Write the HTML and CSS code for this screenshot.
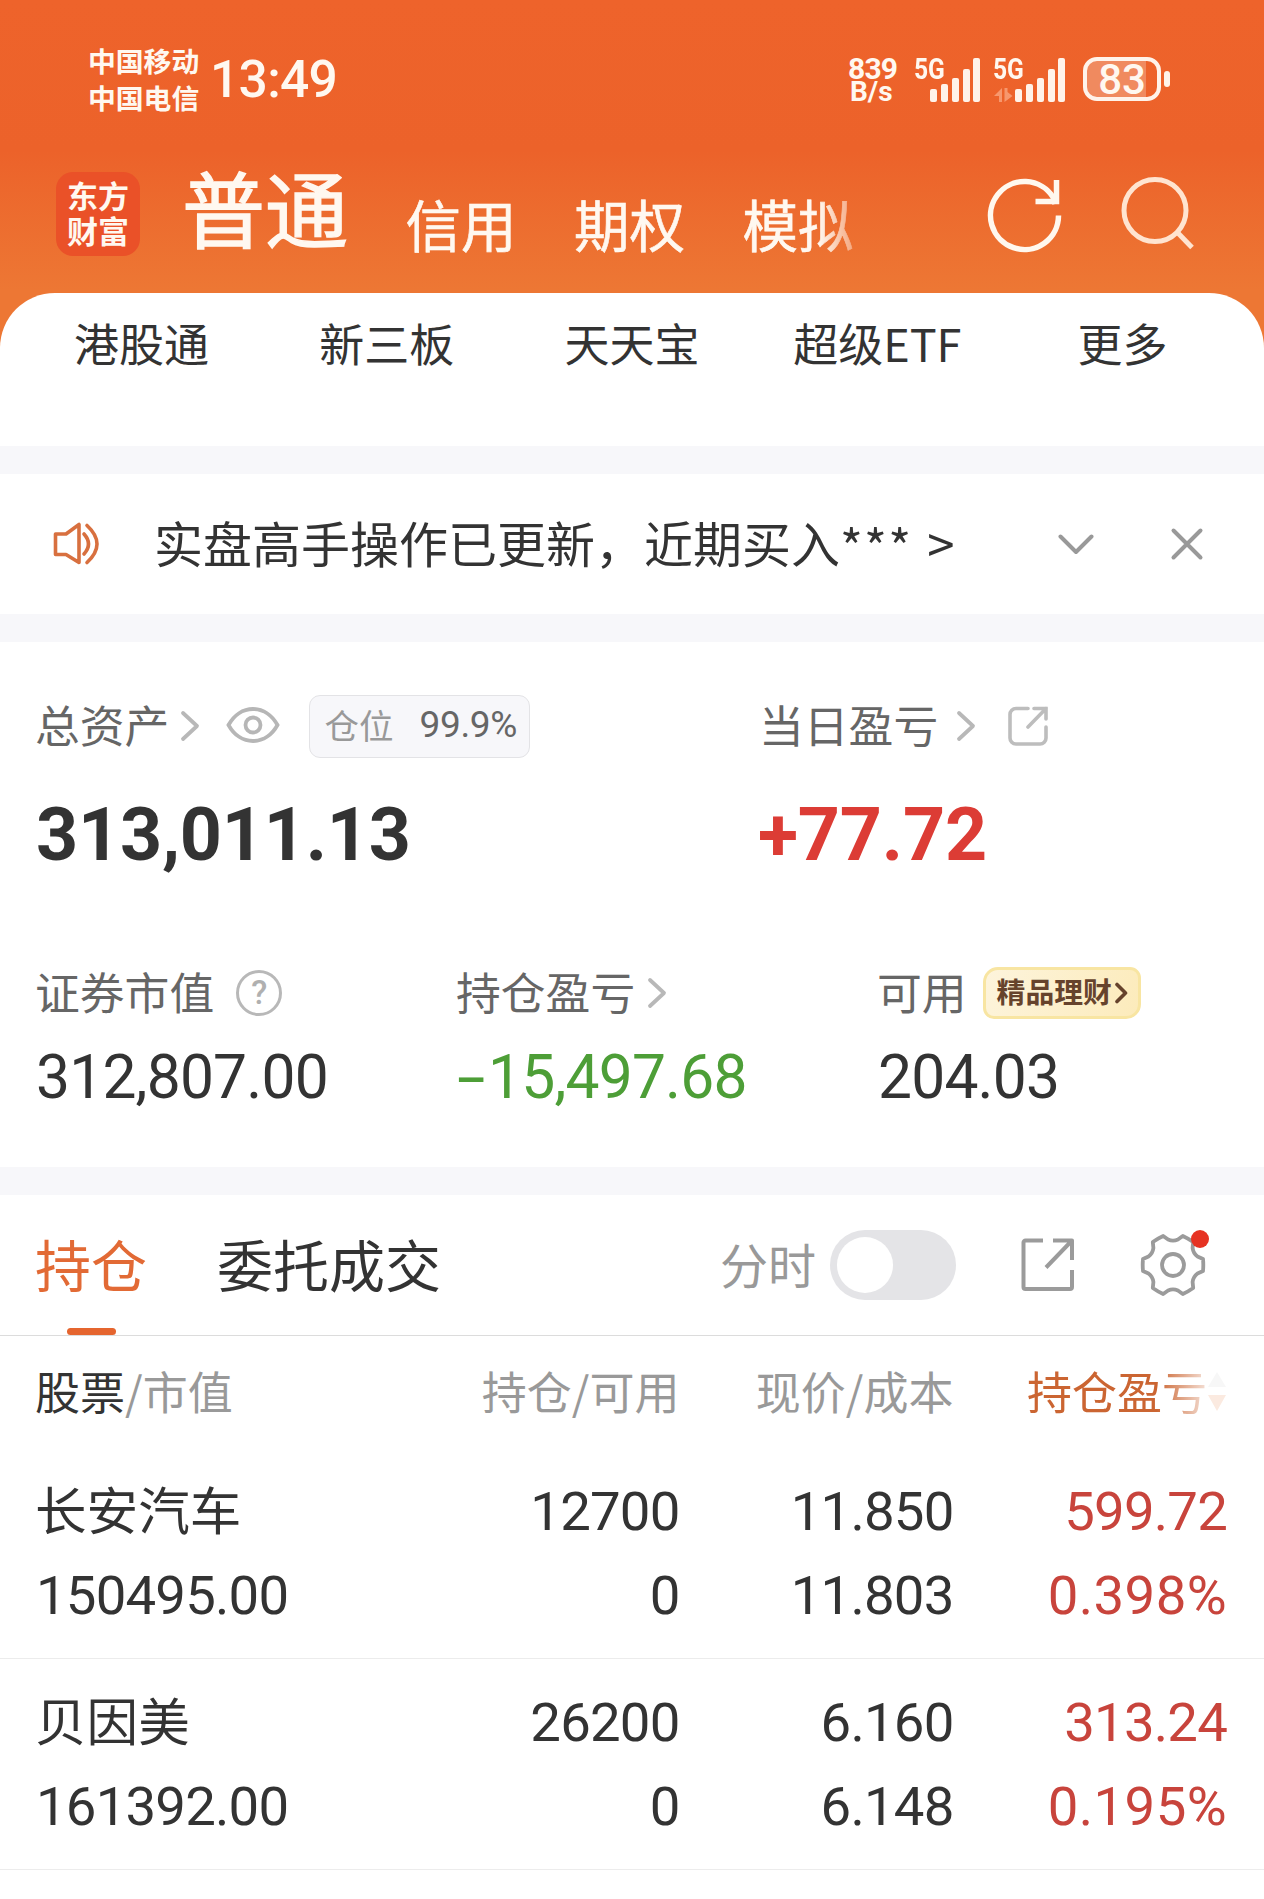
FILE: index.html
```html
<!DOCTYPE html>
<html lang="zh-CN">
<head>
<meta charset="utf-8">
<title>东方财富 - 持仓</title>
<link rel="stylesheet" href="styles.css">
</head>
<body>
<div class="page">
  <header class="header">
    <div class="status">
      <div class="carriers"><span>中国移动</span><span>中国电信</span></div>
      <div class="clock">13:49</div>
      <div class="speed"><span>839</span><span class="unit">B/s</span></div>
      <div class="signal">
        <span class="gen">5G</span>
        <svg width="66" height="46" viewBox="0 0 66 46" fill="#fff3ea"><rect x="15" y="32" width="7" height="13" rx="2"/><rect x="26" y="27" width="7" height="18" rx="2"/><rect x="37" y="21" width="7" height="24" rx="2"/><rect x="48" y="12" width="7" height="33" rx="2"/><rect x="58" y="1" width="7" height="44" rx="2"/></svg>
      </div>
      <div class="signal second">
        <span class="gen">5G</span>
        <svg width="72" height="46" viewBox="0 0 72 46" fill="#fff3ea"><path d="M8 31v14H5v-6H0zM10.500 45V31h3v4l5 4z" fill="#f7976d"/><rect x="21" y="32" width="7" height="13" rx="2"/><rect x="32" y="27" width="7" height="18" rx="2"/><rect x="43" y="21" width="7" height="24" rx="2"/><rect x="54" y="12" width="7" height="33" rx="2"/><rect x="64" y="1" width="7" height="44" rx="2"/></svg>
      </div>
      <div class="battery"><span class="cell">83</span><i class="nub"></i></div>
    </div>
    <div class="topbar">
      <div class="logo"><span>东方</span><span>财富</span></div>
      <nav class="accounts">
        <span class="current">普通</span><span>信用</span><span>期权</span><span>模拟</span>
      </nav>
      <svg class="refresh" width="80" height="80" viewBox="0 0 80 80" fill="none" stroke="#fff8ee" stroke-width="5.500"><path d="M74.500 41.500A34 34 0 1 1 69 23L71 30"/><path d="M72.500 6v21.500H51.500"/></svg>
      <svg class="search" width="80" height="80" viewBox="0 0 80 80" fill="none" stroke="#ffe4d0" stroke-width="5"><circle cx="37" cy="36.500" r="31"/><path d="M59 58l15 15.500"/></svg>
    </div>
  </header>

  <nav class="quick">
    <span>港股通</span><span>新三板</span><span>天天宝</span><span>超级ETF</span><span>更多</span>
  </nav>

  <section class="notice">
    <svg width="48" height="44" viewBox="0 0 48 44" fill="none" stroke="#d8703f" stroke-width="3.600" stroke-linecap="round" stroke-linejoin="round"><path d="M2.500 12H13L26 2.500v38L13 32.500H2.500z"/><path d="M31 12q9 10 0 20M34 3.500q20 18.500 0 37"/></svg>
    <p>实盘高手操作已更新，近期买入<span class="stars">***</span> &gt;</p>
    <svg class="fold" width="36" height="22" viewBox="0 0 36 22" fill="none" stroke="#999" stroke-width="4" stroke-linecap="round" stroke-linejoin="round"><path d="M2.500 3.500L18 19 33.500 3.500"/></svg>
    <svg class="close" width="34" height="34" viewBox="0 0 34 34" fill="none" stroke="#999" stroke-width="4" stroke-linecap="round"><path d="M3.500 3.500l27 27M30.500 3.500l-27 27"/></svg>
  </section>

  <section class="assets">
    <div class="totals">
      <div class="total">
        <div class="label">
          <span>总资产</span>
          <svg class="go near" width="20" height="32" viewBox="0 0 20 32"><path d="M3 3l14 13L3 29"/></svg>
          <svg class="eye" width="54" height="38" viewBox="0 0 54 38" fill="none" stroke="#b6b6b6" stroke-width="3.800"><path d="M2.500 19C8 9 17 3 27 3s19 6 24.500 16C46 29 37 35 27 35S8 29 2.500 19z"/><circle cx="27" cy="19" r="7.500"/></svg>
          <span class="ratio"><span>仓位</span><b>99.9%</b></span>
        </div>
        <div class="sum">313,011.13</div>
      </div>
      <div class="total">
        <div class="label">
          <span>当日盈亏</span>
          <svg class="go far" width="20" height="32" viewBox="0 0 20 32"><path d="M3 3l14 13L3 29"/></svg>
          <svg class="share" width="42" height="42" viewBox="0 0 42 42" fill="none" stroke="#bdbdbd" stroke-width="3.600" stroke-linecap="round"><path d="M21 3.500H9a6 6 0 0 0-6 6V33a6 6 0 0 0 6 6h24a6 6 0 0 0 6-6V22M27 3.500h12V14M39 3.500L21 22"/></svg>
        </div>
        <div class="sum up">+77.72</div>
      </div>
    </div>
    <div class="figures">
      <div class="figure">
        <div class="label"><span>证券市值</span><span class="help">?</span></div>
        <div class="num">312,807.00</div>
      </div>
      <div class="figure">
        <div class="label"><span>持仓盈亏</span><svg class="go mid" width="20" height="32" viewBox="0 0 20 32"><path d="M3 3l14 13L3 29"/></svg></div>
        <div class="num down"><span class="minus">-</span>15,497.68</div>
      </div>
      <div class="figure">
        <div class="label"><span>可用</span>
          <span class="promo">精品理财<svg width="14" height="22" viewBox="0 0 14 22" fill="none" stroke="#66432c" stroke-width="3.600" stroke-linecap="round" stroke-linejoin="round"><path d="M3 2.500l8.500 8.500L3 19.500"/></svg></span>
        </div>
        <div class="num">204.03</div>
      </div>
    </div>
  </section>

  <section class="holdings">
    <div class="tabs">
      <span class="tab active">持仓</span>
      <span class="tab">委托成交</span>
      <span class="minute">分时</span>
      <span class="switch"><i></i></span>
      <svg class="export" width="56" height="56" viewBox="0 0 56 56" fill="none" stroke="#9b9b9b" stroke-width="4" stroke-linejoin="round"><path d="M23 3.500H5.500a2 2 0 0 0-2 2V50a2 2 0 0 0 2 2H50a2 2 0 0 0 2-2V33M33 3.500h19V23M52 3.500L26 30.500"/></svg>
      <span class="gear">
        <svg width="68" height="68" viewBox="-34 -34 68 68" fill="none" stroke="#9b9b9b" stroke-width="3.800" stroke-linejoin="round"><path d="M30 6Q30.600 0 30 -6L24.500 -8.500A12.500 12.500 0 0 1 19.600 -17L20.200 -23Q15.300 -26.500 9.800 -29L4.900 -25.500A12.500 12.500 0 0 1 -4.900 -25.500L-9.800 -29Q-15.300 -26.500 -20.200 -23L-19.600 -17A12.500 12.500 0 0 1 -24.500 -8.500L-30 -6Q-30.600 0 -30 6L-24.500 8.500A12.500 12.500 0 0 1 -19.600 17L-20.200 23Q-15.300 26.500 -9.800 29L-4.900 25.500A12.500 12.500 0 0 1 4.900 25.500L9.800 29Q15.300 26.500 20.200 23L19.600 17A12.500 12.500 0 0 1 24.500 8.500z"/><circle r="11"/></svg>
        <i class="dot"></i>
      </span>
    </div>
    <div class="row thead">
      <span class="first"><em>股票</em>/市值</span>
      <span>持仓/可用</span>
      <span>现价/成本</span>
      <span class="sorted"><span class="fade">持仓盈亏</span><svg width="20" height="42" viewBox="0 0 20 42"><path d="M10 2l9 15H1z" fill="#f7f7f7"/><path d="M10 41l9-16H1z" fill="#fbeae0"/></svg></span>
    </div>
    <div class="row stock">
      <span class="first name">长安汽车</span><span>12700</span><span>11.850</span><span class="gain">599.72</span>
      <span class="first">150495.00</span><span>0</span><span>11.803</span><span class="gain percent">0.398%</span>
    </div>
    <div class="row stock">
      <span class="first name">贝因美</span><span>26200</span><span>6.160</span><span class="gain">313.24</span>
      <span class="first">161392.00</span><span>0</span><span>6.148</span><span class="gain percent">0.195%</span>
    </div>
  </section>
</div>
</body>
</html>
```

FILE: styles.css
```css
* { box-sizing: border-box; }

body {
  margin: 0;
  background: #fff;
  color: #333;
  font-family: "Noto Sans CJK SC", sans-serif;
  white-space: nowrap;
}

i, em { font-style: normal; }
svg { display: block; flex: none; }

.page {
  width: 1264px;
  height: 1899px;
  overflow: hidden;
  background: linear-gradient(#ee632b 0, #ec622a 150px, #ed7734 290px, #ed7734 360px, #fff 360px);
}

/* status bar */
.header { height: 293px; color: #fff8f0; }

.status {
  display: flex;
  align-items: center;
  height: 160px;
  padding-left: 88px;
}

.carriers {
  display: flex;
  flex-direction: column;
  width: 122px;
  margin-top: -3px;
  font-size: 27.800px;
  font-weight: 700;
  line-height: 37px;
}

.clock {
  width: 638px;
  font: 500 51.500px/60px Roboto, sans-serif;
  letter-spacing: -0.700px;
}

.speed {
  display: flex;
  flex-direction: column;
  width: 67px;
  margin-top: 0;
  font: 700 30px/23px Roboto, sans-serif;
  letter-spacing: -0.800px;
}
.speed .unit { padding-left: 2px; font-size: 28px; letter-spacing: 0; }

.signal { position: relative; width: 79px; }
.signal.second { width: 89px; }
.signal .gen {
  position: absolute;
  left: -1px;
  top: -3px;
  font: 700 30px/30px Roboto, sans-serif;
  transform: scaleX(0.820);
  transform-origin: left;
}

.battery { display: flex; align-items: center; gap: 3px; margin-top: -3px; }
.battery .cell {
  width: 78px;
  height: 44px;
  border: 4px solid #fff3ea;
  border-radius: 14px;
  background: linear-gradient(90deg, #f08a5f 59px, transparent 59px);
  font: 500 42px/37px Roboto, sans-serif;
  text-align: center;
}
.battery .nub { width: 6px; height: 16px; border-radius: 3px; background: #fff3ea; }

/* account bar */
.topbar { display: flex; align-items: center; height: 108px; padding-left: 56px; }

.logo {
  display: flex;
  flex-direction: column;
  align-items: center;
  width: 84px;
  height: 84px;
  padding-top: 5px;
  border-radius: 17px;
  background: #ea5128;
  font-size: 31px;
  font-weight: 700;
  line-height: 35px;
}

.accounts {
  display: flex;
  align-items: center;
  gap: 57.500px;
  width: 844px;
  padding-left: 42px;
  font-size: 55.500px;
  line-height: 80px;
  -webkit-text-stroke: 0.600px #fff8f0;
}
.accounts span { margin-top: 18px; }
.accounts .current { margin: -16px 0 0; font-size: 83px; -webkit-text-stroke-width: 1.400px; }
.accounts span:last-child {
  -webkit-mask-image: linear-gradient(90deg, #000 68%, rgba(0, 0, 0, 0.400) 100%);
  mask-image: linear-gradient(90deg, #000 68%, rgba(0, 0, 0, 0.400) 100%);
}
.search { margin-left: 54px; }

/* quick entries */
.quick {
  display: grid;
  grid-template-columns: repeat(5, 245.300px);
  justify-content: center;
  height: 153px;
  padding-top: 19px;
  border-radius: 55px 55px 0 0;
  background: #fff;
  font-size: 45px;
  line-height: 62px;
  text-align: center;
}

/* notice strip */
.notice {
  display: flex;
  align-items: center;
  height: 196px;
  padding-left: 53px;
  border: solid #f7f7fa;
  border-width: 28px 0;
  background: #fff;
}
.notice p {
  width: 904px;
  margin: -5px 0 0 53px;
  font-size: 49px;
  line-height: 70px;
  word-spacing: 4px;
}
.notice .stars { letter-spacing: 1.200px; vertical-align: -3px; line-height: 60px; }
.notice .close { margin-left: 76px; }

/* assets */
.assets { height: 525px; background: #fff; }

.totals { display: grid; grid-template-columns: 724px 1fr; padding: 49px 0 0 36px; }
.figures { display: grid; grid-template-columns: repeat(3, 421px); padding: 97px 0 0 36px; }

.label {
  display: flex;
  align-items: center;
  height: 70px;
  color: #666;
  font-size: 44.800px;
  line-height: 66px;
}
.label > span:first-child { margin: -4px 0 0 -1px; }

.go { fill: none; stroke: #b8b8b8; stroke-width: 3.800; stroke-linecap: round; stroke-linejoin: round; }
.go.near { margin-left: 11px; }
.go.far { margin-left: 18px; }
.go.mid { margin-left: 12px; }
.eye { margin: -2px 0 0 26px; }
.share { margin-left: 31px; }

.ratio {
  display: flex;
  align-items: center;
  gap: 26px;
  width: 221px;
  height: 63px;
  margin: 1px 0 0 29px;
  padding-left: 14px;
  border: 1px solid #e3e3e6;
  border-radius: 11px;
  background: #f7f7fa;
  color: #999;
  font-size: 34.500px;
  line-height: 50px;
}
.ratio span { margin-top: -6px; }
.ratio b { margin-top: -3px; color: #666; font: 400 37px/50px Roboto, sans-serif; letter-spacing: -0.300px; }

.sum { height: 100px; padding-top: 24px; font: 700 73.500px/100px Roboto, sans-serif; letter-spacing: -0.200px; }
.up { color: #dc3c35; text-indent: -2px; }

.help {
  width: 46px;
  height: 46px;
  margin-left: 22px;
  border: 3.500px solid #b8b8b8;
  border-radius: 50%;
  color: #b0b0b0;
  font: 500 33px/40px Roboto, sans-serif;
  text-align: center;
}

.promo {
  display: flex;
  align-items: center;
  width: 158px;
  height: 52px;
  margin-left: 16px;
  padding: 0 0 4px 11px;
  border: 3px solid #f8e5a2;
  border-radius: 15px 11px 15px 11px;
  background: linear-gradient(110deg, #fdf4dc, #fcebbb);
  color: #66432c;
  font-size: 28.800px;
  font-weight: 700;
}
.promo svg { margin: 3px 0 0 2px; }

.num { padding-top: 15px; font: 400 60.500px/70px Roboto, sans-serif; letter-spacing: -0.800px; }
.down { color: #4d9e37; }
.minus { display: inline-block; width: 31px; transform: scaleX(1.700); transform-origin: left; }

/* holdings */
.holdings { height: 732px; border-top: 28px solid #f7f7fa; background: #fff; }

.tabs {
  display: flex;
  align-items: center;
  height: 141px;
  padding-left: 36px;
  border-bottom: 1px solid #dcdcdc;
  font-size: 56px;
}
.tab { position: relative; height: 140px; line-height: 136px; }
.tab + .tab { margin-left: 70px; }
.tab.active { margin-left: -1px; color: #e26a35; }
.tab.active::after {
  content: "";
  position: absolute;
  left: 32px;
  bottom: 0;
  width: 49px;
  height: 7px;
  border-radius: 3.500px;
  background: #e5652f;
}
.minute { width: 110px; margin: -5px 0 0 279px; color: #999; font-size: 48px; }

.switch {
  display: flex;
  width: 126px;
  height: 70px;
  padding: 7px;
  border-radius: 35px;
  background: #e4e4e7;
}
.switch i { width: 56px; height: 56px; border-radius: 50%; background: #fff; }
.export { margin-left: 63.500px; }
.gear { position: relative; margin-left: 63px; }
.gear .dot {
  position: absolute;
  right: -2px;
  top: -1px;
  width: 18px;
  height: 18px;
  border-radius: 50%;
  background: #e63323;
}

.row {
  display: grid;
  grid-template-columns: 344px 299.500px 274px 273.500px;
  padding-left: 36px;
  text-align: right;
}
.first { text-align: left; }

.thead {
  height: 112px;
  padding-top: 21px;
  color: #999;
  font-size: 45px;
  line-height: 68px;
}
.thead em { color: #333; }
.thead .first { margin-left: -1px; }
.sorted { display: flex; align-items: center; justify-content: flex-end; height: 68px; color: #cb6532; }
.fade {
  -webkit-mask-image: linear-gradient(90deg, #000 72%, rgba(0, 0, 0, 0.250) 98%);
  mask-image: linear-gradient(90deg, #000 72%, rgba(0, 0, 0, 0.250) 98%);
}

.stock {
  grid-auto-rows: 84px;
  height: 211px;
  padding-top: 21px;
  border-bottom: 1px solid #ececec;
  font: 400 54.500px/84px Roboto, sans-serif;
  letter-spacing: -0.800px;
}
.name { margin: -3px 0 0 -1px; font-family: "Noto Sans CJK SC", sans-serif; font-size: 51.600px; letter-spacing: 0; }
.gain { color: #c8443c; }
.percent { letter-spacing: 0.400px; }
```
